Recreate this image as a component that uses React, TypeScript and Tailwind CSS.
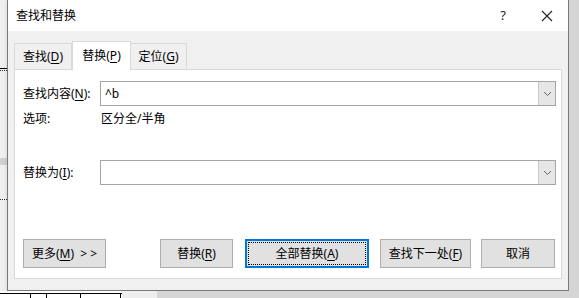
import React from 'react';

const font = { fontFamily: '"Noto Sans", "Noto Sans CJK SC", sans-serif' };

function Key({ k }: { k: string }) {
  return <span className="underline underline-offset-2">{k}</span>;
}

function Chevron() {
  return (
    <svg width="9" height="6" viewBox="0 0 9 6" fill="none">
      <path d="M1 1l3.5 3.5L8 1" stroke="#666" strokeWidth="1" />
    </svg>
  );
}

function ComboInput({ value }: { value?: string }) {
  return (
    <div className="flex h-[25px] w-[456px] shrink-0 border border-[#a5a5a5] bg-white">
      <div className="flex-1 pl-[4px] leading-[23px] text-[12px] text-black">{value}</div>
      <div className="flex w-[17px] items-center justify-center border-l border-[#c8c8c8] bg-[#e6e6e6]">
        <Chevron />
      </div>
    </div>
  );
}

function Btn({ children, w, focus }: { children: React.ReactNode; w: string; focus?: boolean }) {
  if (focus) {
    return (
      <button className={`${w} h-[29px] shrink-0 border-2 border-[#0078d7] bg-[#e1e1e1] p-[1px] text-[12px] text-black`}>
        <span className="flex h-full w-full items-center justify-center border border-dotted border-black">{children}</span>
      </button>
    );
  }
  return (
    <button className={`${w} h-[29px] shrink-0 border border-[#adadad] bg-[#e1e1e1] text-[12px] text-black flex items-center justify-center`}>
      {children}
    </button>
  );
}

export default function App() {
  return (
    <div className="flex h-[298px] w-[579px] flex-col overflow-hidden bg-[#dadada]" style={font}>
      <div className="flex h-[291px]">
        {/* document behind, left edge */}
        <div className="flex w-[7px] shrink-0 flex-col bg-[#efefef]">
          <div className="mt-[68px] h-[1px] w-full bg-black" />
          <div className="mt-[1px] h-[1px] w-full border-t border-dotted border-[#333]" />
          <div className="mt-[87px] h-[7px] w-full bg-[#d0d0d0]" />
          <div className="mt-[34px] h-[1px] w-full border-t border-dotted border-[#333]" />
        </div>

        {/* dialog */}
        <div className="flex w-[562px] shrink-0 flex-col border-x border-b border-[#7a7a7a] bg-[#f0f0f0] shadow-[2px_2px_6px_rgba(0,0,0,0.25)]">
          {/* title bar */}
          <div className="flex h-[31px] items-center bg-white">
            <span className="ml-[8px] text-[12px] text-black">查找和替换</span>
            <span className="ml-auto mr-[35px] text-[13px] text-[#222]">?</span>
            <svg className="mr-[15px]" width="12" height="12" viewBox="0 0 12 12">
              <path d="M1 1l10 10M11 1L1 11" stroke="#222" strokeWidth="1.1" />
            </svg>
          </div>

          {/* tabs */}
          <div className="mt-[10px] flex items-end pl-[6px]">
            <div className="flex h-[26px] w-[58px] items-center justify-center border border-b-0 border-[#d9d9d9] text-[12px] text-black">
              <span>查找(<Key k="D" />)</span>
            </div>
            <div className="relative -mb-[1px] flex h-[29px] w-[59px] items-center justify-center border border-b-0 border-[#d9d9d9] bg-white text-[12px] text-black">
              <span>替换(<Key k="P" />)</span>
            </div>
            <div className="flex h-[26px] w-[56px] items-center justify-center border border-b-0 border-l-0 border-[#d9d9d9] text-[12px] text-black">
              <span>定位(<Key k="G" />)</span>
            </div>
          </div>

          {/* panel */}
          <div className="mx-[6px] flex h-[210px] flex-col border border-[#d9d9d9] bg-white pl-[8px] pr-[5px] text-[12px] text-black">
            <div className="mt-[11px] flex items-center">
              <span className="w-[77px] shrink-0">查找内容(<Key k="N" />):</span>
              <ComboInput value="^b" />
            </div>
            <div className="mt-[6px] flex h-[14px] items-center">
              <span className="w-[78px] shrink-0">选项:</span>
              <span>区分全/半角</span>
            </div>
            <div className="mt-[34px] flex items-center">
              <span className="w-[77px] shrink-0">替换为(<Key k="I" />):</span>
              <ComboInput />
            </div>
            <div className="mt-[54px] flex items-center">
              <Btn w="w-[83px]">
                <span>更多(<Key k="M" />) &nbsp;&gt; &gt;</span>
              </Btn>
              <div className="ml-[54px]">
                <Btn w="w-[73px]">
                  <span>替换(<Key k="R" />)</span>
                </Btn>
              </div>
              <div className="ml-[12px]">
                <Btn w="w-[124px]" focus>
                  <span>全部替换(<Key k="A" />)</span>
                </Btn>
              </div>
              <div className="ml-[11px]">
                <Btn w="w-[91px]">
                  <span>查找下一处(<Key k="F" />)</span>
                </Btn>
              </div>
              <div className="ml-[10px]">
                <Btn w="w-[74px]">
                  <span>取消</span>
                </Btn>
              </div>
            </div>
          </div>
        </div>

        <div className="flex-1 bg-[#d4d4d4]" />
      </div>

      {/* document behind, bottom edge */}
      <div className="flex h-[7px]">
        <div className="relative w-[122px] bg-white">
          <div className="mt-[2px] h-[1px] w-full bg-black" />
          <div className="absolute left-[30px] top-[2px] h-[5px] w-[1px] bg-black" />
          <div className="absolute left-[46px] top-[2px] h-[5px] w-[1px] bg-black" />
          <div className="absolute left-[80px] top-[2px] h-[5px] w-[1px] bg-black" />
          <div className="absolute left-[120px] top-[2px] h-[5px] w-[1px] bg-black" />
        </div>
        <div className="w-[35px] bg-[#eeeeee]" />
        <div className="flex-1 bg-[#d6d6d6]" />
      </div>
    </div>
  );
}
